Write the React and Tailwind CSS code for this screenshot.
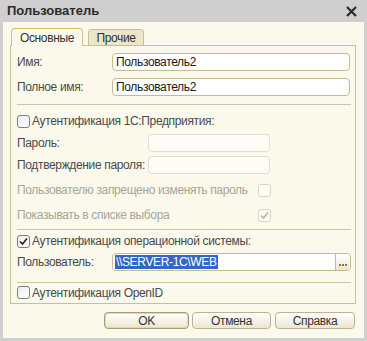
const font = { fontFamily: '"Liberation Sans", Arial, sans-serif' };

const Check = ({ checked, disabled }) => (
  <span
    className={
      "flex h-[13px] w-[13px] shrink-0 items-center justify-center rounded-[3px] border " +
      (disabled ? "border-[#d9d4bf] bg-[#fdfcf6]" : "border-[#7f7f7f] bg-gradient-to-br from-[#ececec] to-white")
    }
  >
    {checked && (
      <svg width="9" height="9" viewBox="0 0 9 9">
        <path
          d="M1 4.5 L3.5 7 L8 1.5"
          fill="none"
          stroke={disabled ? "#b8b4a6" : "#222"}
          strokeWidth="1.6"
        />
      </svg>
    )}
  </span>
);

const Input = ({ value, className, disabled }) => (
  <div
    className={
      "flex h-[18px] items-center rounded-[4px] border px-[3px] text-[12px] whitespace-nowrap " +
      (disabled ? "border-[#e3dfcc] bg-[#fdfcf6]" : "border-[#c5bb92] bg-white text-[#1a1a1a]") +
      " " +
      className
    }
  >
    {value}
  </div>
);

const Label = ({ children, className }) => (
  <span className={"shrink-0 whitespace-nowrap " + (className || "")}>{children}</span>
);

const Separator = ({ className }) => <div className={"ml-[6px] mr-[4px] h-px bg-[#cfc6a3] " + className} />;

const Button = ({ label, primary, className }) => (
  <div
    className={
      "flex h-[17px] items-center justify-center rounded-[4px] border bg-gradient-to-b from-white to-[#ebe6d2] text-[12px] text-[#333] " +
      (primary ? "border-[#a89d70] shadow-[inset_0_0_0_1px_#e3d9b0]" : "border-[#bdb48f]") +
      " " +
      className
    }
  >
    {label}
  </div>
);

const App = () => {
  return (
    <div className="flex h-[341px] w-[367px] flex-col bg-[#cfcfcf] tracking-[-0.35px]" style={font}>
      <div className="flex h-[22px] shrink-0 items-center justify-between pl-[7px] pr-[10px]">
        <span className="text-[13px] font-bold tracking-normal text-[#2b2b2b]">Пользователь</span>
        <svg width="11" height="11" viewBox="0 0 11 11">
          <path d="M1 1 L10 10 M10 1 L1 10" stroke="#2b2b2b" strokeWidth="2.2" />
        </svg>
      </div>

      <div className="mx-[3px] mb-[3px] flex flex-1 flex-col bg-[#fbf9ec] pl-[7px] pr-[8px] pt-[6px]">
        <div className="flex h-[17px] items-end pl-px text-[12px] text-[#333]">
          <div className="relative z-10 -mb-px flex h-[18px] w-[72px] items-center justify-center rounded-t-[4px] border border-b-0 border-[#c8be97] border-t-[#e0b84d] bg-[#fbf9ec]">
            Основные
          </div>
          <div className="ml-[5px] flex h-[16px] w-[56px] items-center justify-center rounded-t-[4px] border border-b-0 border-[#c8be97] bg-[#ebe5c9]">
            Прочие
          </div>
        </div>

        <div className="flex h-[259px] flex-col border border-[#c8be97] pt-[7px] text-[12px] text-[#4a4a4a]">
          <div className="flex h-[18px] items-center pl-[6px] pr-[5px]">
            <Label className="w-[95px]">Имя:</Label>
            <Input value="Пользователь2" className="flex-1" />
          </div>
          <div className="mt-[7px] flex h-[18px] items-center pl-[6px] pr-[5px]">
            <Label className="w-[95px]">Полное имя:</Label>
            <Input value="Пользователь2" className="flex-1" />
          </div>

          <Separator className="mt-[8px]" />

          <div className="mt-[7px] flex h-[18px] items-center gap-[2px] pl-[6px]">
            <Check />
            <Label>Аутентификация 1С:Предприятия:</Label>
          </div>
          <div className="mt-[4px] flex h-[18px] items-center pl-[6px]">
            <Label className="w-[131px]">Пароль:</Label>
            <Input disabled className="w-[122px] shrink-0" />
          </div>
          <div className="mt-[4px] flex h-[18px] items-center pl-[6px]">
            <Label className="w-[131px]">Подтверждение пароля:</Label>
            <Input disabled className="w-[122px] shrink-0" />
          </div>
          <div className="mt-[7px] flex h-[18px] items-center pl-[6px] text-[#a8a597]">
            <Label className="w-[241px]">Пользователю запрещено изменять пароль</Label>
            <Check disabled />
          </div>
          <div className="mt-[7px] flex h-[18px] items-center pl-[6px] text-[#a8a597]">
            <Label className="w-[241px]">Показывать в списке выбора</Label>
            <Check checked disabled />
          </div>

          <Separator className="mt-[5px]" />

          <div className="mt-[2px] flex h-[18px] items-center gap-[2px] pl-[6px]">
            <Check checked />
            <Label>Аутентификация операционной системы:</Label>
          </div>
          <div className="mt-[3px] flex h-[18px] items-center pl-[6px] pr-[4px]">
            <Label className="w-[95px]">Пользователь:</Label>
            <div className="flex h-[18px] flex-1 items-stretch overflow-hidden rounded-[4px] border border-[#c5bb92] bg-white">
              <div className="flex flex-1 items-center pl-[2px]">
                <span className="whitespace-nowrap bg-[#3267c9] px-px leading-[14px] text-white">\\SERVER-1C\WEB</span>
              </div>
              <div className="flex w-[15px] items-end justify-center gap-px border-l border-[#c5bb92] bg-gradient-to-b from-white to-[#ebe6d2] pb-[4px]">
                <span className="h-[2px] w-[2px] bg-[#9a7318]" />
                <span className="h-[2px] w-[2px] bg-[#9a7318]" />
                <span className="h-[2px] w-[2px] bg-[#9a7318]" />
              </div>
            </div>
          </div>

          <Separator className="mt-[11px]" />

          <div className="flex h-[19px] items-center gap-[2px] pl-[6px]">
            <Check />
            <Label>Аутентификация OpenID</Label>
          </div>
        </div>

        <div className="mt-[8px] flex justify-end pr-[1px]">
          <Button label="OK" primary className="w-[85px]" />
          <Button label="Отмена" className="ml-[3px] w-[79px]" />
          <Button label="Справка" className="ml-[4px] w-[80px]" />
        </div>
      </div>
    </div>
  );
};

export default App;
